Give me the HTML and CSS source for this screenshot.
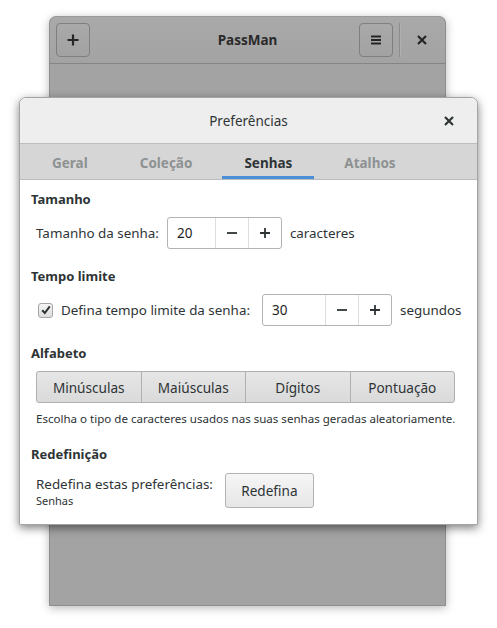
FILE: index.html
```html
<!DOCTYPE html>
<html lang="pt">
<head>
<meta charset="utf-8">
<title>PassMan</title>
<link rel="stylesheet" href="styles.css">
</head>
<body>
<div class="desktop">
  <div class="win main-win">
    <header class="main-hb">
      <div class="hb-left">
        <button class="hb-btn" aria-label="Adicionar">
          <svg width="14" height="14" viewBox="0 0 14 14"><path d="M7 1.5v11M1.5 7h11" stroke="#262626" stroke-width="2.2" fill="none"/></svg>
        </button>
      </div>
      <div class="main-title">PassMan</div>
      <div class="hb-right">
        <button class="hb-btn" aria-label="Menu">
          <svg width="12" height="12" viewBox="0 0 12 12"><path d="M1 2.5h10M1 6h10M1 9.5h10" stroke="#262626" stroke-width="2" fill="none"/></svg>
        </button>
        <span class="hb-sep"></span>
        <button class="hb-close" aria-label="Fechar">
          <svg width="10" height="10" viewBox="0 0 10 10"><path d="M1 1l8 8M9 1l-8 8" stroke="#262626" stroke-width="2.2" fill="none"/></svg>
        </button>
      </div>
    </header>
    <div class="main-body"></div>
  </div>

  <div class="win dialog">
    <header class="dlg-hb">
      <div class="dlg-title">Preferências</div>
      <button class="dlg-close" aria-label="Fechar">
        <svg width="10" height="10" viewBox="0 0 10 10"><path d="M1 1l8 8M9 1l-8 8" stroke="#2e3436" stroke-width="2.2" fill="none"/></svg>
      </button>
    </header>
    <nav class="tabs">
      <span class="tab">Geral</span>
      <span class="tab">Coleção</span>
      <span class="tab active">Senhas</span>
      <span class="tab">Atalhos</span>
    </nav>
    <div class="content">
      <section class="sec">
        <h3 class="sec-title">Tamanho</h3>
        <div class="row">
          <span class="lbl">Tamanho da senha:</span>
          <div class="spin">
            <span class="spin-entry narrow">20</span>
            <span class="spin-btn">
              <svg width="12" height="12" viewBox="0 0 12 12"><path d="M1 6h10" stroke="#2e3436" stroke-width="1.8"/></svg>
            </span>
            <span class="spin-btn">
              <svg width="12" height="12" viewBox="0 0 12 12"><path d="M1 6h10M6 1v10" stroke="#2e3436" stroke-width="1.8"/></svg>
            </span>
          </div>
          <span class="lbl">caracteres</span>
        </div>
      </section>

      <section class="sec">
        <h3 class="sec-title">Tempo limite</h3>
        <div class="row">
          <span class="check-wrap">
            <span class="check">
              <svg width="12" height="12" viewBox="0 0 12 12"><path d="M2.2 6.2l2.6 2.8 5-6.6" stroke="#2e3436" stroke-width="2" fill="none"/></svg>
            </span>
            <span class="lbl">Defina tempo limite da senha:</span>
          </span>
          <div class="spin">
            <span class="spin-entry wide">30</span>
            <span class="spin-btn">
              <svg width="12" height="12" viewBox="0 0 12 12"><path d="M1 6h10" stroke="#2e3436" stroke-width="1.8"/></svg>
            </span>
            <span class="spin-btn">
              <svg width="12" height="12" viewBox="0 0 12 12"><path d="M1 6h10M6 1v10" stroke="#2e3436" stroke-width="1.8"/></svg>
            </span>
          </div>
          <span class="lbl">segundos</span>
        </div>
      </section>

      <section class="sec">
        <h3 class="sec-title">Alfabeto</h3>
        <div class="seg">
          <span class="seg-btn">Minúsculas</span>
          <span class="seg-btn">Maiúsculas</span>
          <span class="seg-btn">Dígitos</span>
          <span class="seg-btn">Pontuação</span>
        </div>
        <p class="help">Escolha o tipo de caracteres usados nas suas senhas geradas aleatoriamente.</p>
      </section>

      <section class="sec">
        <h3 class="sec-title">Redefinição</h3>
        <div class="row">
          <div class="reset-lbl">
            <span class="lbl">Redefina estas preferências:</span>
            <span class="sub">Senhas</span>
          </div>
          <button class="btn">Redefina</button>
        </div>
      </section>
    </div>
  </div>
</div>
</body>
</html>
```

FILE: styles.css
```css
* { box-sizing: border-box; }
html, body {
  margin: 0;
  padding: 0;
  background: #ffffff;
  font-family: "Noto Sans", "DejaVu Sans", sans-serif;
  font-size: 13px;
  color: #2e3436;
}
button { font-family: inherit; }

.desktop {
  position: relative;
  width: 497px;
  height: 628px;
  overflow: hidden;
}

.win {
  position: absolute;
  display: flex;
  flex-direction: column;
}

/* main (dimmed) window */
.main-win {
  left: 49px;
  top: 16px;
  width: 397px;
  height: 590px;
  background: #a3a3a3;
  border: 1px solid #8e8e8e;
  border-top-color: #9a9a9a;
  border-radius: 7px 7px 0 0;
  box-shadow: 0 2px 10px rgba(0,0,0,0.28);
}
.main-hb {
  height: 47px;
  flex: none;
  display: grid;
  grid-template-columns: 1fr auto 1fr;
  align-items: center;
  padding: 0 6px;
  background: linear-gradient(#a9a9a9, #a3a3a3);
  border-bottom: 1px solid #858585;
  border-radius: 7px 7px 0 0;
}
.hb-left { display: flex; }
.hb-right {
  display: flex;
  align-items: center;
  justify-content: flex-end;
}
.hb-btn {
  width: 34px;
  height: 34px;
  margin: 0;
  padding: 0;
  display: flex;
  align-items: center;
  justify-content: center;
  background: linear-gradient(#a9a9a9, #a2a2a2);
  border: 1px solid #7f7f7f;
  border-radius: 4px;
}
.main-title {
  text-align: center;
  font-weight: bold;
  font-size: 13.5px;
  color: #2a2a2a;
}
.hb-sep {
  width: 1px;
  height: 34px;
  margin: 0 5px 0 6px;
  background: #8c8c8c;
  box-shadow: 1px 0 0 #afafaf;
}
.hb-close {
  width: 34px;
  height: 34px;
  padding: 0;
  border: 0;
  background: transparent;
  display: flex;
  align-items: center;
  justify-content: center;
}
.main-body { flex: 1; }

/* dialog */
.dialog {
  left: 19px;
  top: 97px;
  width: 459px;
  height: 428px;
  background: #ffffff;
  border: 1px solid #a4a4a4;
  border-radius: 7px 7px 0 0;
  box-shadow: 0 3px 10px rgba(0,0,0,0.5);
}
.dlg-hb {
  height: 46px;
  flex: none;
  display: flex;
  align-items: center;
  justify-content: center;
  position: relative;
  background: #eeeeee;
  border-bottom: 1px solid #bdbdbd;
  border-radius: 7px 7px 0 0;
}
.dlg-title {
  font-size: 13.5px;
  color: #2e3436;
}
.dlg-close {
  position: absolute;
  right: 12px;
  top: 7px;
  width: 32px;
  height: 32px;
  padding: 0;
  border: 0;
  background: transparent;
  display: flex;
  align-items: center;
  justify-content: center;
}

.tabs {
  height: 36px;
  flex: none;
  display: flex;
  gap: 8px;
  padding-left: 10px;
  background: #d6d6d6;
  border-bottom: 1px solid #bcbcbc;
}
.tab {
  display: flex;
  align-items: center;
  padding: 6px 22px 0;
  font-weight: bold;
  font-size: 13.5px;
  color: #8e9192;
  border-bottom: 3px solid transparent;
}
.tab.active {
  color: #2e3436;
  border-bottom-color: #4a90d9;
}

.content {
  flex: 1;
  display: flex;
  flex-direction: column;
  gap: 18px;
  padding: 10px 11px 0 11px;
}
.sec {
  display: flex;
  flex-direction: column;
  gap: 9px;
}
.sec-title {
  margin: 0;
  font-size: 13px;
  line-height: 18px;
  font-weight: bold;
  color: #2e3436;
}
.row {
  display: flex;
  align-items: center;
  gap: 8px;
  padding-left: 5px;
}
.lbl {
  font-size: 13.4px;
  line-height: 18px;
  color: #2e3436;
}

.spin {
  display: flex;
  height: 32px;
  border: 1px solid #b3b3b3;
  border-radius: 3px;
  background: #ffffff;
}
.spin-entry {
  display: flex;
  align-items: center;
  padding-left: 9px;
  font-size: 13.5px;
  color: #1e1e1e;
}
.spin-entry.narrow { width: 47px; }
.spin-entry.wide { width: 62px; }
.spin-btn {
  width: 33px;
  display: flex;
  align-items: center;
  justify-content: center;
  border-left: 1px solid #dedede;
}

.check-wrap {
  display: flex;
  align-items: center;
  gap: 8px;
  padding-left: 2px;
  margin-right: 4px;
}
.check {
  width: 15px;
  height: 15px;
  display: flex;
  align-items: center;
  justify-content: center;
  border: 1px solid #a5a5a5;
  border-radius: 3px;
  background: linear-gradient(#f4f4f4, #dedede);
}

.seg {
  display: flex;
  margin-left: 5px;
  width: 419px;
  height: 32px;
  border: 1px solid #b0b0b0;
  border-radius: 3px;
  background: linear-gradient(#e6e6e6, #dadada);
  overflow: hidden;
}
.seg-btn {
  flex: 1;
  display: flex;
  align-items: center;
  justify-content: center;
  font-size: 13.6px;
  color: #2e3436;
  border-left: 1px solid #b0b0b0;
}
.seg-btn:first-child { border-left: 0; }

.help {
  margin: -1px 0 0 5px;
  font-size: 11.55px;
  line-height: 16px;
  color: #2e3436;
  white-space: nowrap;
}

.reset-lbl {
  display: flex;
  flex-direction: column;
  padding-top: 3px;
  margin-right: 4px;
}
.sub {
  font-size: 11px;
  line-height: 16px;
  color: #2e3436;
}
.btn {
  width: 89px;
  height: 35px;
  margin: 0;
  padding: 0;
  font-size: 13.6px;
  color: #2e3436;
  background: linear-gradient(#f6f6f6, #e6e6e6);
  border: 1px solid #b3b3b3;
  border-radius: 3px;
}
```
